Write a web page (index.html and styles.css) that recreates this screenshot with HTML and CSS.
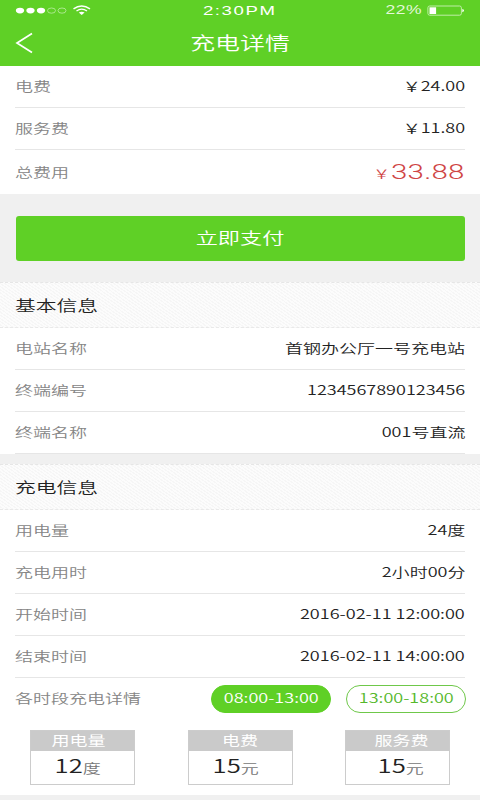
FILE: index.html
```html
<!DOCTYPE html>
<html lang="zh-CN">
<head>
<meta charset="utf-8">
<title>充电详情</title>
<link rel="stylesheet" href="styles.css">
</head>
<body>
<header class="top">
  <div class="status">
    <svg class="signal" width="96" height="20" viewBox="0 0 96 20">
      <g fill="#fff"><ellipse cx="20" cy="10.6" rx="4.1" ry="2.8"/><ellipse cx="30.5" cy="10.6" rx="4.1" ry="2.8"/><ellipse cx="41" cy="10.6" rx="4.1" ry="2.8"/></g>
      <g fill="none" stroke="#c9f0b6" stroke-width=".7"><ellipse cx="51.5" cy="10.6" rx="4" ry="2.6"/><ellipse cx="62" cy="10.6" rx="4" ry="2.6"/></g>
      <g fill="none" stroke="#fff" stroke-width="1.4"><path d="M73.5 8.8Q81.700 3.200 90 8.800"/><path d="M76.500 11Q81.700 7.300 87 11"/></g>
      <path d="M78.800 12.600Q81.700 10.800 84.600 12.600L81.700 15z" fill="#fff"/>
    </svg>
    <span class="clock">2:30PM</span>
    <div class="power">
      <span class="percent">22%</span>
      <svg width="38" height="12" viewBox="0 0 38 12">
        <rect x=".9" y="1" width="33.500" height="9.200" rx="1.800" fill="none" stroke="#c9f0b6" stroke-width=".9"/>
        <rect x="2.500" y="2.300" width="6.600" height="6.700" fill="#fff"/>
        <path d="M35.300 4Q37 4.300 37 5.600T35.300 7.200z" fill="#fff"/>
      </svg>
    </div>
  </div>
  <nav class="nav">
    <svg class="back" width="20" height="22" viewBox="0 0 20 22"><path d="M17 1.500L2 11L17 20.500" fill="none" stroke="#fff" stroke-width="1.700"/></svg>
    <h1 class="t">充电详情</h1>
  </nav>
</header>

<section class="rows fees">
  <div class="row"><span class="t label">电费</span><span class="t value">￥24.00</span></div>
  <div class="row"><span class="t label">服务费</span><span class="t value">￥11.80</span></div>
  <div class="row"><span class="t label">总费用</span><span class="total"><span class="t yen">￥</span><span class="sum">33.88</span></span></div>
</section>

<div class="pay"><button class="btn"><span class="t">立即支付</span></button></div>

<h2 class="head"><span class="t">基本信息</span></h2>
<section class="rows basic">
  <div class="row"><span class="t label">电站名称</span><span class="t value">首钢办公厅一号充电站</span></div>
  <div class="row"><span class="t label">终端编号</span><span class="t value">1234567890123456</span></div>
  <div class="row"><span class="t label">终端名称</span><span class="t value">001号直流</span></div>
</section>

<h2 class="head second"><span class="t">充电信息</span></h2>
<section class="rows charge">
  <div class="row"><span class="t label">用电量</span><span class="t value">24度</span></div>
  <div class="row"><span class="t label">充电用时</span><span class="t value">2小时00分</span></div>
  <div class="row"><span class="t label">开始时间</span><span class="t value date">2016-02-11 12:00:00</span></div>
  <div class="row"><span class="t label">结束时间</span><span class="t value date">2016-02-11 14:00:00</span></div>
  <div class="row periods"><span class="t label">各时段充电详情</span>
    <div class="pills"><span class="pill on"><span class="t">08:00-13:00</span></span><span class="pill"><span class="t">13:00-18:00</span></span></div>
  </div>
</section>
<section class="cards">
  <div class="card first"><div class="cap"><span class="t">用电量</span></div><div class="num"><span class="t">12<small>度</small></span></div></div>
  <div class="card"><div class="cap"><span class="t">电费</span></div><div class="num"><span class="t">15<small>元</small></span></div></div>
  <div class="card last"><div class="cap"><span class="t">服务费</span></div><div class="num"><span class="t">15<small>元</small></span></div></div>
</section>
</body>
</html>
```
FILE: styles.css
```css
* { box-sizing: border-box; }
body {
  margin: 0;
  width: 480px;
  height: 800px;
  overflow: hidden;
  background: #f0f0f0;
  color: #222;
  font-family: "Noto Sans CJK SC", sans-serif;
  font-size: 13px;
  font-weight: 350;
  line-height: 20px;
}
h1, h2 { margin: 0; font-weight: 350; }

/* wide lettering used throughout */
.t { display: inline-block; white-space: nowrap; transform: scaleX(1.385); }
.label { color: #858585; transform-origin: left; }
.value { transform-origin: right; }
.date { transform: scaleX(1.388); }

.top { height: 66px; background: #5fd026; color: #fff; }
.status { height: 20px; display: grid; grid-template-columns: 1fr auto 1fr; }
.signal { display: block; }
.clock {
  font: 13px/21px "Liberation Sans", sans-serif;
  letter-spacing: 1.1px;
  transform: scaleX(1.43);
}
.power { display: flex; justify-content: flex-end; align-items: center; padding-right: 15px; gap: 5px; }
.percent {
  font: 12.5px/21px "Liberation Sans", sans-serif;
  color: #e4f8da;
  letter-spacing: .4px;
  transform: scaleX(1.4);
  transform-origin: right;
}
.nav { height: 46px; display: grid; grid-template-columns: 1fr auto 1fr; align-items: center; }
.back { margin-left: 15px; }
.nav h1 { font-size: 18px; line-height: 44px; padding-bottom: 2px; }

.rows { background: #fff; padding: 0 15px; display: grid; }
.row { display: flex; justify-content: space-between; align-items: center; border-bottom: 1px solid #e6e6e6; padding-bottom: 1px; }
.fees { height: 128px; grid-template-rows: 42px 42px 44px; }
.fees .row:last-child { border: 0; }
.total { display: flex; align-items: baseline; color: #cf4545; }
.yen { font-size: 12px; transform-origin: right; }
.sum {
  font: 300 21px/24px Roboto, sans-serif;
  letter-spacing: .2px;
  transform: scaleX(1.4);
  transform-origin: right;
  margin-left: 22px;
}

.pay { height: 88px; padding: 22px 15px 21px 16px; }
.btn {
  display: block;
  width: 100%;
  height: 45px;
  padding: 0 0 3px;
  border: 0;
  border-radius: 3px;
  background: #5fd026;
  color: #fff;
  font: 350 16px/42px "Noto Sans CJK SC", sans-serif;
}

.head {
  height: 46px;
  padding-left: 15px;
  border-top: 1px dashed #e6e6e6;
  border-bottom: 1px dashed #e9e9e9;
  background: repeating-linear-gradient(35deg, #fcfcfc 0 1.500px, #f6f6f6 1.500px 2.600px);
  font-size: 15px;
  line-height: 43px;
}
.head .t { transform-origin: left; }
.second { margin-top: 10px; }
.basic { height: 126px; grid-template-rows: 42px 42px 42px; }
.charge { height: 210px; grid-template-rows: 42px 42px 42px 42px 42px; }
.charge .periods { border: 0; }
.charge .periods .label { padding-bottom: 2px; }
.pills { display: flex; gap: 15px; margin-right: -1px; }
.pill {
  width: 120px;
  height: 28px;
  padding-bottom: 2px;
  border: 1px solid #6fc84a;
  border-radius: 14px;
  color: #55b82b;
  display: flex;
  justify-content: center;
  align-items: center;
}
.pill.on { background: #5fd026; border-color: #5fd026; color: #fff; }

.cards { height: 75px; padding: 10px 30px 0; background: #fff; display: flex; justify-content: space-between; }
.card { width: 105px; height: 55px; border: 1px solid #ccc; text-align: center; }
.cap { height: 20px; background: #cacaca; color: #fff; line-height: 18px; font-weight: 400; }
.num { height: 33px; padding-right: 9px; font-size: 18.5px; line-height: 29px; }
.num small { font-size: 13px; color: #777; }
.first .cap { padding-right: 7px; }
.first .num { padding-right: 10px; }
.last .cap { padding-left: 8px; }
.last .num { padding: 0 0 0 6px; }
```
